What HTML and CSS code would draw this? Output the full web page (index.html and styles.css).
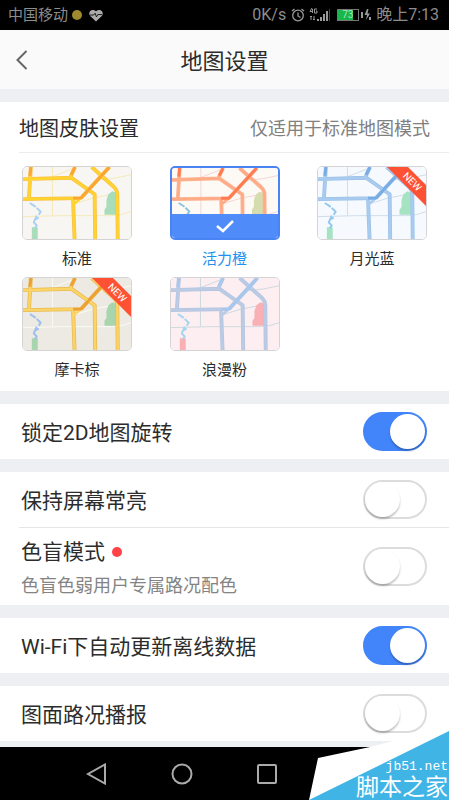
FILE: index.html
```html
<!DOCTYPE html>
<html lang="zh-CN">
<head>
<meta charset="utf-8">
<meta name="viewport" content="width=device-width, initial-scale=1">
<title>地图设置</title>
<link rel="stylesheet" href="styles.css">
</head>
<body>
<svg class="defs" aria-hidden="true">
  <symbol id="map" viewBox="0 0 110 74" preserveAspectRatio="none">
    <rect class="land" width="110" height="74"/>
    <path class="minor" d="M30 0V50M0 51L40 50H90Q100 50 110 46M52 38Q70 31 92 28M78 13Q95 12 110 8M30 10L50 2"/>
    <path class="park" d="M85 34L87 28L91 25L96 27V49H83V44L85 41Z"/>
    <path class="park" d="M9 62H15V74H9Z"/>
    <path class="water" d="M7 37L13 41M14 42L18 46L16 49M14 50L11 57L14 60L12 63M12 54L16 52"/>
    <path class="edge" d="M8 0L6 33M0 12.5L49 11L73 28L73.5 74M53 0L48 11M0 33L59 32M51 33L52.5 74M70 0L91 19Q96 23 96 28L96.5 74M59 32L88 0"/>
    <path class="road" d="M8 0L6 33M0 12.5L49 11L73 28L73.5 74M53 0L48 11M0 33L59 32M51 33L52.5 74M70 0L91 19Q96 23 96 28L96.5 74M52 38L59 32"/>
    <path class="main-road" d="M51 32H59L88 0M53 0L49 8M8 0L7 9"/>
  </symbol>
  <symbol id="ribbon" viewBox="0 0 39 39">
    <path fill="#ff5234" d="M0 0H21L39 18V39Z"/>
  </symbol>
</svg>

<div class="status">
  <span>中国移动</span>
  <span class="status-dot"></span>
  <svg class="heart" viewBox="0 0 15 13" aria-hidden="true"><path fill="#aaa" d="M7.500 13L1.300 7C-2 3 3-2 7.500 2C12-2 17 3 13.700 7Z"/><path fill="none" stroke="#111" d="M1 6H5L6.500 4L8 8L9.500 5.500H14"/></svg>
  <span class="speed">0K/s</span>
  <svg class="alarm" viewBox="0 0 14 14" aria-hidden="true"><g fill="none" stroke="#999" stroke-width="1.300"><circle cx="7" cy="7.500" r="5.300"/><path d="M7 4.500V8L9.500 9.500M1 3L3.500 1M13 3L10.500 1"/></g></svg>
  <svg class="signal" viewBox="0 0 22 14" aria-hidden="true"><path d="M3 0L1 3.500H4M3.500 1V5M8 1H5.500V5H8V3H7M2 8V12M1 9L2 8L3 9M5 8V12M4 11L5 12L6 11" fill="none" stroke="#999"/><path fill="#999" d="M8 11H10V13H8ZM11 9H13V13H11ZM14 6H16V13H14ZM17 3H19V13H17Z"/><path fill="#444" d="M20 1H21V13H20Z"/></svg>
  <span class="battery">73</span>
  <svg class="bolt" viewBox="0 0 10 12" aria-hidden="true"><path fill="#999" d="M0 3H2V9H0ZM6 0L3.500 6H6L5 11L9 4.500H6.500L7.500 0ZM8 8H10V11H8Z"/></svg>
  <span class="time">晚上7:13</span>
</div>

<header class="top">
  <button class="back" type="button" aria-label="返回"><svg viewBox="0 0 12 20"><path d="M10.500 1L1.500 10L10.500 19" fill="none" stroke="#666" stroke-width="2"/></svg></button>
  <h1>地图设置</h1>
</header>

<main>
  <section class="card">
    <div class="card-head"><h2>地图皮肤设置</h2><span class="hint">仅适用于标准地图模式</span></div>
    <div class="skins" role="radiogroup" aria-label="地图皮肤设置">
      <label class="skin standard"><input type="radio" name="skin"><span class="thumb"><svg class="map"><use href="#map"/></svg></span><span class="name">标准</span></label>
      <label class="skin orange"><input type="radio" name="skin" checked><span class="thumb"><svg class="map"><use href="#map"/></svg><span class="picked"><svg viewBox="0 0 18 13"><path d="M1 6L7 11L17 1" fill="none" stroke="#fff" stroke-width="2.500"/></svg></span></span><span class="name">活力橙</span></label>
      <label class="skin blue"><input type="radio" name="skin"><span class="thumb"><svg class="map"><use href="#map"/></svg><span class="new"><svg><use href="#ribbon"/></svg><b>NEW</b></span></span><span class="name">月光蓝</span></label>
      <label class="skin mocha"><input type="radio" name="skin"><span class="thumb"><svg class="map"><use href="#map"/></svg><span class="new"><svg><use href="#ribbon"/></svg><b>NEW</b></span></span><span class="name">摩卡棕</span></label>
      <label class="skin pink"><input type="radio" name="skin"><span class="thumb"><svg class="map"><use href="#map"/></svg></span><span class="name">浪漫粉</span></label>
    </div>
  </section>

  <section class="card">
    <div class="row"><label for="lock">锁定2D地图旋转</label><input class="switch" id="lock" type="checkbox" checked></div>
  </section>

  <section class="card">
    <div class="row"><label for="awake">保持屏幕常亮</label><input class="switch" id="awake" type="checkbox"></div>
    <div class="row tall"><label for="blind"><span class="with-dot">色盲模式</span><small>色盲色弱用户专属路况配色</small></label><input class="switch" id="blind" type="checkbox"></div>
  </section>

  <section class="card">
    <div class="row"><label for="wifi">Wi-Fi下自动更新离线数据</label><input class="switch" id="wifi" type="checkbox" checked></div>
  </section>

  <section class="card">
    <div class="row"><label for="traffic">图面路况播报</label><input class="switch" id="traffic" type="checkbox"></div>
  </section>
</main>

<nav class="keys">
  <button type="button" aria-label="后退"><svg viewBox="0 0 22 22"><path d="M19 1.500V20.500L2 11Z"/></svg></button>
  <button type="button" aria-label="主页"><svg viewBox="0 0 22 22"><circle cx="11" cy="11" r="9.500"/></svg></button>
  <button type="button" aria-label="最近任务"><svg viewBox="0 0 22 22"><rect x="2" y="2" width="18" height="18" rx="1"/></svg></button>
</nav>

<div class="mark">
  <svg viewBox="0 0 140 69" aria-hidden="true"><path fill="#fff" d="M0 69L9 27L61 16L110 3L140 0V69Z"/><path fill="#41b4e6" d="M0 69L140 0V69Z"/></svg>
  <span class="site">jb51.net</span>
  <span class="site-name">脚本之家</span>
</div>
</body>
</html>
```
FILE: styles.css
```css
* { box-sizing: border-box; }

body {
  margin: 0;
  min-height: 100vh;
  display: flex;
  flex-direction: column;
  position: relative;
  background: #eeeff2;
  color: #2c2c2c;
  font-family: Roboto, "Noto Sans CJK SC", sans-serif;
}

h1, h2 { margin: 0; font-weight: 400; }
button { border: 0; padding: 0; background: none; }
svg { display: block; }
.defs { position: absolute; width: 0; height: 0; }

/* status bar */
.status {
  height: 30px;
  padding: 0 10px 0 8px;
  display: flex;
  align-items: center;
  background: #000;
  color: #8c8c8c;
  font-size: 15px;
  line-height: 32px;
}
.status-dot { width: 10px; height: 10px; margin: 0 7px 0 4px; border-radius: 50%; background: #a08a2c; }
.heart { width: 14px; height: 13px; }
.speed { margin-left: auto; font-size: 16px; }
.alarm { width: 14px; height: 14px; margin: 0 4px 0 5px; }
.signal { width: 22px; height: 14px; margin-right: 6px; }
.battery {
  width: 22px;
  height: 12px;
  border: 1px solid #777;
  background: linear-gradient(90deg, #18b64b 75%, #000 75%);
  color: #a8e8b8;
  font-size: 10px;
  line-height: 10px;
  padding-left: 4px;
}
.bolt { width: 10px; height: 12px; margin: 0 5px 0 2px; }
.time { font-size: 16px; }

/* title bar */
.top {
  height: 59px;
  display: grid;
  grid-template-columns: 44px 1fr 44px;
  align-items: center;
  background: #fafafa;
}
.back { height: 44px; padding-left: 16px; }
.back svg { width: 12px; height: 20px; }
h1 { padding-top: 4px; font-size: 22px; text-align: center; line-height: 32px; }

main {
  flex: 1;
  display: flex;
  flex-direction: column;
  gap: 13px;
  padding: 13px 0 6px;
}
.card { background: #fff; }
.card-head {
  height: 51px;
  margin-left: 19px;
  padding-right: 19px;
  display: flex;
  align-items: center;
  justify-content: space-between;
  border-bottom: 1px solid #ececee;
}
h2 { font-size: 20px; }
.hint { font-size: 18px; color: #808080; }

/* map skins */
.skins {
  display: grid;
  grid-template-columns: repeat(3, 110px);
  justify-content: space-between;
  padding: 13px 22px 3px;
}
.skin { position: relative; display: block; text-align: center; }
.skin input { position: absolute; opacity: 0; margin: 0; }
.thumb {
  position: relative;
  display: block;
  height: 74px;
  border: 1px solid #d4d4d4;
  border-radius: 5px;
  overflow: hidden;
}
.map { width: 100%; height: 100%; }
.name { display: block; padding-top: 2px; font-size: 15px; line-height: 35px; }
.land { fill: var(--land); }
.park { fill: var(--park); }
.minor, .water, .edge, .road, .main-road { fill: none; stroke-linejoin: round; }
.minor { stroke: var(--minor); stroke-width: 1; }
.water { stroke: var(--water); stroke-width: 2; }
.edge { stroke: var(--edge); stroke-width: 4; }
.road { stroke: var(--road); stroke-width: 2.5; }
.main-road { stroke: var(--main); stroke-width: 3; }

.standard { --land: #f8f6f3; --park: #a9dcb8; --minor: #f4e8b8; --water: #a9d0f5; --edge: #fbc14a; --road: #ffd42e; --main: #fba534; }
.orange { --land: #fdf9f5; --park: #d5dcae; --minor: #f3d4d4; --water: #8cc4dd; --edge: #fcb596; --road: #ffac86; --main: #ff7c50; }
.blue { --land: #f6fafe; --park: #a5e3c3; --minor: #cfdce8; --water: #94c8ef; --edge: #9dc3e8; --road: #a9cbef; --main: #78ace4; }
.mocha { --land: #eceae2; --park: #a9d5ae; --minor: #fafaf6; --water: #9cbff0; --edge: #e9b94e; --road: #fbd467; --main: #eda033; }
.pink { --land: #fdeef1; --park: #f8b0b5; --minor: #ccd9dd; --water: #a2d6f0; --edge: #b4c5e2; --road: #bccbe4; --main: #a6c8ee; }

.orange .thumb { border: 2px solid #4a84f4; }
.orange .name { color: #1e92ee; }
.picked {
  position: absolute;
  inset: auto 0 0;
  height: 24px;
  display: grid;
  place-items: center;
  background: #508bfa;
}
.picked svg { width: 18px; height: 13px; }
.new { position: absolute; top: 0; right: 0; width: 39px; height: 39px; }
.new svg { width: 39px; height: 39px; }
.new b {
  position: absolute;
  inset: 8px 0 auto 11px;
  width: 28px;
  color: #fff;
  font-size: 10px;
  font-weight: 400;
  line-height: 14px;
  transform: rotate(45deg);
}

/* setting rows */
.row {
  min-height: 55px;
  margin-left: 19px;
  padding: 0 22px 0 2px;
  display: flex;
  align-items: center;
  justify-content: space-between;
  font-size: 21px;
  line-height: 34px;
}
.row label { padding-top: 2px; }
.row + .row { border-top: 1px solid #e6e6e8; }
.tall { min-height: 78px; }
.row.tall label { padding: 7px 0 2px; }
.with-dot { display: flex; align-items: center; gap: 7px; }
.with-dot::after { content: ""; width: 10px; height: 10px; border-radius: 50%; background: #ff4347; }
small { display: block; font-size: 18px; color: #848484; }

.switch {
  appearance: none;
  flex: none;
  width: 64px;
  height: 39px;
  margin: 0;
  border: 2px solid #dcdcdc;
  border-radius: 20px;
  background: #fff;
}
.switch::before {
  content: "";
  display: block;
  width: 35px;
  height: 35px;
  border-radius: 50%;
  background: #fff;
  box-shadow: 0 2px 2px rgba(0, 0, 0, .25);
}
.switch:checked { border-color: #4285fa; background: #4285fa; }
.switch:checked::before { margin-left: auto; }

/* navigation keys */
.keys {
  height: 53px;
  padding: 0 54px;
  display: grid;
  grid-template-columns: repeat(4, 1fr);
  place-items: center;
  background: #000;
}
.keys svg { width: 22px; height: 22px; fill: none; stroke: #aaa; stroke-width: 2; }

/* corner mark */
.mark {
  position: absolute;
  right: 0;
  bottom: 0;
  width: 140px;
  height: 69px;
  padding: 28px 1px 0 0;
  color: #fff;
  text-align: right;
}
.mark svg { position: absolute; inset: 0; width: 140px; height: 69px; }
.mark span { position: relative; display: block; }
.site { font: 13px/16px "Liberation Mono", monospace; }
.site-name { font-size: 23px; line-height: 25px; }
```
